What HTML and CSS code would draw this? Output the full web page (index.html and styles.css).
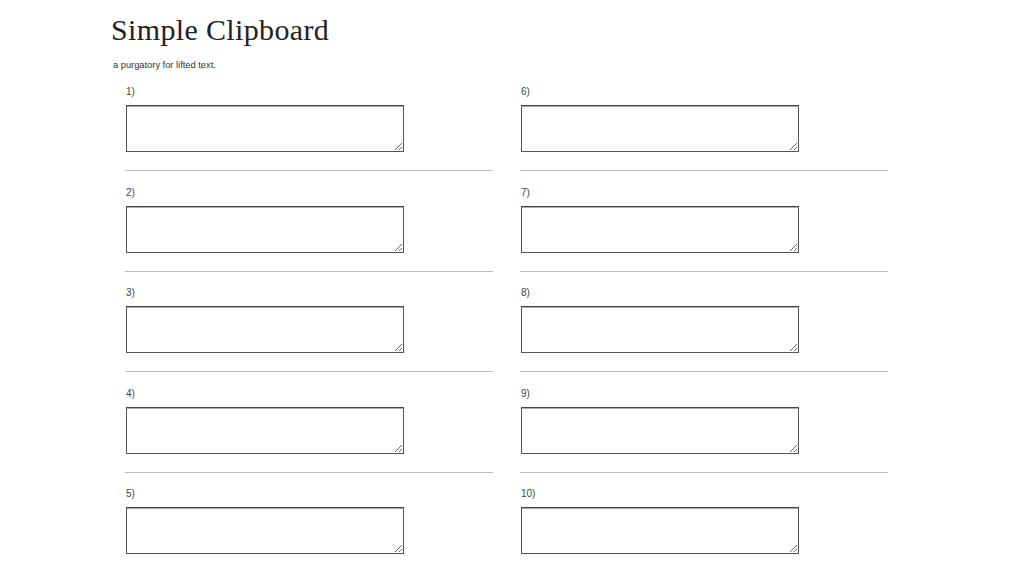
FILE: index.html
```html
<!DOCTYPE html>
<html>
<head>
<meta charset="utf-8">
<title>Simple Clipboard</title>
<link rel="stylesheet" href="styles.css">
</head>
<body>
<div class="page">
  <h1 class="title">Simple Clipboard</h1>
  <p class="subtitle">a purgatory for lifted text.</p>
  <div class="columns">
    <div class="column">
      <div class="item"><div class="label">1)</div><textarea class="box"></textarea><hr class="rule"></div>
      <div class="item"><div class="label">2)</div><textarea class="box"></textarea><hr class="rule"></div>
      <div class="item"><div class="label">3)</div><textarea class="box"></textarea><hr class="rule"></div>
      <div class="item"><div class="label">4)</div><textarea class="box"></textarea><hr class="rule"></div>
      <div class="item"><div class="label">5)</div><textarea class="box"></textarea></div>
    </div>
    <div class="column">
      <div class="item"><div class="label">6)</div><textarea class="box"></textarea><hr class="rule"></div>
      <div class="item"><div class="label">7)</div><textarea class="box"></textarea><hr class="rule"></div>
      <div class="item"><div class="label">8)</div><textarea class="box"></textarea><hr class="rule"></div>
      <div class="item"><div class="label">9)</div><textarea class="box"></textarea><hr class="rule"></div>
      <div class="item"><div class="label">10)</div><textarea class="box"></textarea></div>
    </div>
  </div>
</div>
</body>
</html>
```
FILE: styles.css
```css
html, body {
  margin: 0;
  padding: 0;
  background: #ffffff;
}
.page {
  padding-left: 111px;
  padding-top: 12px;
}
.title {
  margin: 0;
  font-family: "Liberation Serif", "Times New Roman", serif;
  font-weight: normal;
  font-size: 30px;
  line-height: 36px;
  color: #222;
  letter-spacing: 0.35px;
}
.subtitle {
  margin: 12px 0 0 2px;
  font-family: "Liberation Sans", Arial, sans-serif;
  font-size: 9.3px;
  line-height: 11px;
  color: #333;
}
.columns {
  display: flex;
  gap: 27px;
  margin-top: 14px;
  padding-left: 14px;
}
.column {
  width: 368px;
  display: flex;
  flex-direction: column;
}
.item {
  display: flex;
  flex-direction: column;
  align-items: flex-start;
}
.label {
  font-family: "Liberation Sans", Arial, sans-serif;
  font-size: 10px;
  line-height: 12px;
  color: #444;
  padding-left: 1px;
  padding-top: 1px;
  margin-bottom: 7px;
}
.box {
  box-sizing: border-box;
  width: 278px;
  height: 47px;
  margin: 0 0 0 1px;
  padding: 2px;
  border: 1px solid #555;
  border-top-color: #444;
  box-shadow: inset 0 1px 0 #aaa;
  background: #fff;
  font-family: "Liberation Mono", monospace;
  font-size: 12px;
}
.rule {
  align-self: stretch;
  margin: 18px 0 14.5px 0;
  border: 0;
  border-top: 1px solid #bbb;
  height: 0;
}
```
